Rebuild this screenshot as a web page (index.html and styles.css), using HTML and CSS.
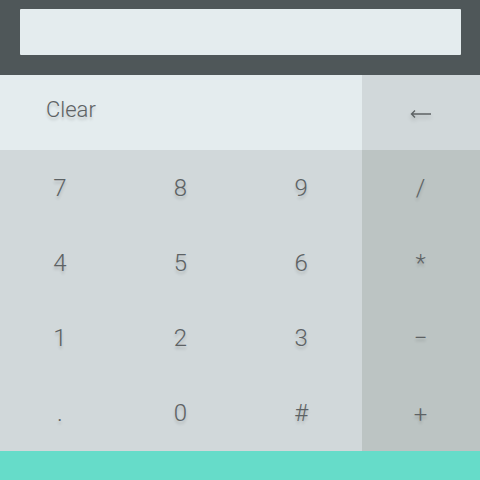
FILE: index.html
```html
<!DOCTYPE html>
<html>
<head>
<meta charset="utf-8">
<link rel="stylesheet" href="styles.css">
</head>
<body>
<div class="calc">
  <div class="header"><div class="display"></div></div>
  <div class="body">
    <div class="left">
      <div class="clear-row"><span class="key clear">Clear</span></div>
      <div class="digits">
        <span class="key">7</span><span class="key">8</span><span class="key">9</span>
        <span class="key">4</span><span class="key">5</span><span class="key">6</span>
        <span class="key">1</span><span class="key">2</span><span class="key">3</span>
        <span class="key">.</span><span class="key">0</span><span class="key">#</span>
      </div>
    </div>
    <div class="right">
      <span class="key back"><svg class="arrow" width="22" height="10" viewBox="0 0 22 10"><path d="M1.5 5H21M5 1.5L1.5 5L5 8.5" fill="none" stroke="#5d6264" stroke-width="1.4"/></svg></span>
      <div class="ops">
        <span class="key">/</span>
        <span class="key">*</span>
        <span class="key">&minus;</span>
        <span class="key plus">+</span>
      </div>
    </div>
  </div>
  <div class="footer"></div>
</div>
</body>
</html>
```
FILE: styles.css
```css
html, body { margin: 0; padding: 0; }
body { width: 480px; height: 480px; overflow: hidden; font-family: Roboto, "Liberation Sans", Arial, sans-serif; }
.calc { display: flex; flex-direction: column; height: 480px; }
.header { background: #4f5759; height: 75px; box-sizing: border-box; padding: 9px 19px 0 20px; }
.display { background: #e4ecee; height: 46px; border-radius: 1px; }
.body { display: flex; height: 376px; }
.left { width: 362px; display: flex; flex-direction: column; }
.right { flex: 1; display: flex; flex-direction: column; background: #bcc4c3; }
.clear-row { height: 75px; background: #e4ecee; display: flex; align-items: center; padding-left: 46px; }
.digits { flex: 1; background: #d1d8da; display: grid; grid-template-columns: repeat(3, 1fr); grid-template-rows: repeat(4, 75px); }
.ops { flex: 1; display: grid; grid-template-rows: repeat(4, 75px); }
.key { display: flex; align-items: center; justify-content: center; color: #5d6264; font-size: 24px; font-weight: 300; text-shadow: 0 3px 3px rgba(0,0,0,0.16); padding-right: 1px; }
.clear { font-size: 22px; font-weight: 300; margin-top: -6px; }
.back { height: 75px; background: #d1d8da; padding-top: 2px; box-sizing: border-box; }
.plus { padding-top: 4px; }
.arrow { filter: drop-shadow(0 3px 2px rgba(0,0,0,0.16)); }
.footer { flex: 1; background: #66dcc9; }
```
